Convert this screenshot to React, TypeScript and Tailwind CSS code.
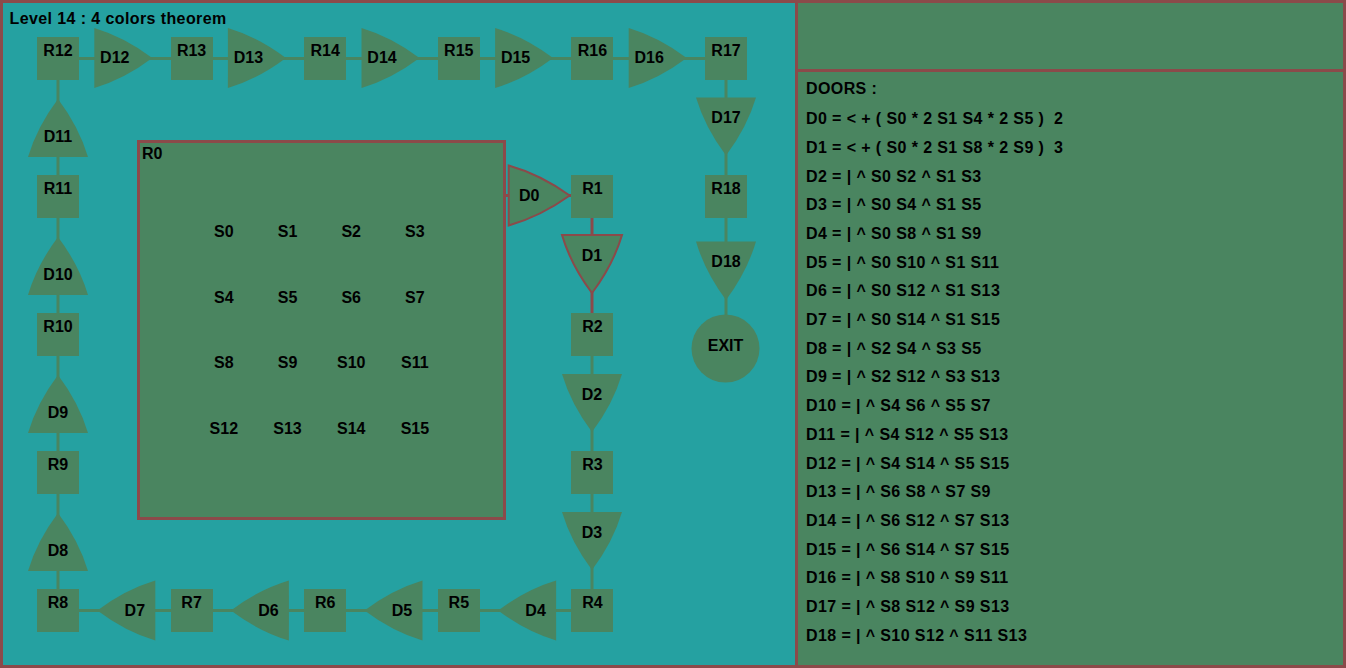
import React from 'react';

// diagram coordinates are page pixels; the left panel starts at (3,3)
const OFF = 3;
const colX = (i: number) => 58 + 133.6 * i;
const rowY = (j: number) => 58.5 + 138 * j;

type Room = { name: string; x: number; y: number };
type Door = { name: string; bx: number; by: number; dx: number; dy: number; len?: number; hot?: boolean };

const rooms: Room[] = [
    { name: 'R12', x: colX(0), y: rowY(0) },
    { name: 'R13', x: colX(1), y: rowY(0) },
    { name: 'R14', x: colX(2), y: rowY(0) },
    { name: 'R15', x: colX(3), y: rowY(0) },
    { name: 'R16', x: colX(4), y: rowY(0) },
    { name: 'R17', x: colX(5), y: rowY(0) },
    { name: 'R11', x: colX(0), y: rowY(1) },
    { name: 'R10', x: colX(0), y: rowY(2) },
    { name: 'R9', x: colX(0), y: rowY(3) },
    { name: 'R8', x: colX(0), y: rowY(4) },
    { name: 'R7', x: colX(1), y: rowY(4) },
    { name: 'R6', x: colX(2), y: rowY(4) },
    { name: 'R5', x: colX(3), y: rowY(4) },
    { name: 'R4', x: colX(4), y: rowY(4) },
    { name: 'R1', x: colX(4), y: rowY(1) },
    { name: 'R2', x: colX(4), y: rowY(2) },
    { name: 'R3', x: colX(4), y: rowY(3) },
    { name: 'R18', x: colX(5), y: rowY(1) },
];

const doors: Door[] = [
    ...['D12', 'D13', 'D14', 'D15', 'D16'].map((name, i) => ({ name, bx: colX(i) + 66.8 - 30.5, by: 58, dx: 1, dy: 0 })),
    ...['D11', 'D10', 'D9', 'D8'].map((name, j) => ({ name, bx: 58, by: rowY(j) + 69 + 29.5, dx: 0, dy: -1 })),
    ...['D7', 'D6', 'D5', 'D4'].map((name, i) => ({ name, bx: colX(i) + 66.8 + 30.5, by: 610.5, dx: -1, dy: 0 })),
    { name: 'D1', bx: 592, by: rowY(1) + 69 - 30.5, dx: 0, dy: 1, hot: true },
    { name: 'D2', bx: 592, by: rowY(2) + 69 - 29.5, dx: 0, dy: 1 },
    { name: 'D3', bx: 592, by: rowY(3) + 69 - 29.5, dx: 0, dy: 1 },
    { name: 'D17', bx: 726, by: rowY(0) + 69 - 30, dx: 0, dy: 1 },
    { name: 'D18', bx: 726, by: 241.5, dx: 0, dy: 1, len: 58.5 },
    { name: 'D0', bx: 508.7, by: 195.5, dx: 1, dy: 0, len: 61, hot: true },
];

const doorPath = (d: Door) => {
    const len = d.len ?? 58;
    const p = (u: number, v: number) => `${d.bx + u * d.dx - v * d.dy},${d.by + u * d.dy + v * d.dx}`;
    return `M${p(0, -30)} Q${p(len * 0.52, -21)} ${p(len, 0)} Q${p(len * 0.52, 21)} ${p(0, 30)} Z`;
};

const rules = [
    'D0 = < + ( S0 * 2 S1 S4 * 2 S5 )  2',
    'D1 = < + ( S0 * 2 S1 S8 * 2 S9 )  3',
    'D2 = | ^ S0 S2 ^ S1 S3',
    'D3 = | ^ S0 S4 ^ S1 S5',
    'D4 = | ^ S0 S8 ^ S1 S9',
    'D5 = | ^ S0 S10 ^ S1 S11',
    'D6 = | ^ S0 S12 ^ S1 S13',
    'D7 = | ^ S0 S14 ^ S1 S15',
    'D8 = | ^ S2 S4 ^ S3 S5',
    'D9 = | ^ S2 S12 ^ S3 S13',
    'D10 = | ^ S4 S6 ^ S5 S7',
    'D11 = | ^ S4 S12 ^ S5 S13',
    'D12 = | ^ S4 S14 ^ S5 S15',
    'D13 = | ^ S6 S8 ^ S7 S9',
    'D14 = | ^ S6 S12 ^ S7 S13',
    'D15 = | ^ S6 S14 ^ S7 S15',
    'D16 = | ^ S8 S10 ^ S9 S11',
    'D17 = | ^ S8 S12 ^ S9 S13',
    'D18 = | ^ S10 S12 ^ S11 S13',
];

// text centred on x, sitting on baseline y
const Label: React.FC<{ x: number; y: number; text: string }> = ({ x, y, text }) => (
    <div
        className="absolute -translate-x-1/2 whitespace-nowrap text-[16px] leading-[16px]"
        style={{ left: x - OFF, top: y - OFF - 13.5 }}
    >
        {text}
    </div>
);

export default function App() {
    return (
        <div className="w-[1346px] h-[668px] flex gap-[3px] border-[3px] border-[#8b4a4a] bg-[#8b4a4a] font-['Liberation_Sans',Arial,sans-serif] font-bold text-black">
            <div className="relative w-[792px] h-full bg-[#25a1a1] overflow-hidden">
                <svg className="absolute inset-0" width={792} height={662} viewBox="3 3 792 662">
                    <g stroke="#4a8560" strokeWidth={3} fill="none">
                        <path d="M58 58.5 H726" />
                        <path d="M58 58.5 V610.5" />
                        <path d="M58 610.5 H592" />
                        <path d="M592 334.5 V610.5" />
                        <path d="M726 58.5 V348.5" />
                    </g>
                    <g stroke="#8b4a4a" strokeWidth={3} fill="none">
                        <path d="M592 196.5 V334.5" />
                        <path d="M506 195.5 H592" />
                    </g>
                    {doors.map((d) => (
                        <path
                            key={d.name}
                            d={doorPath(d)}
                            fill="#4a8560"
                            stroke={d.hot ? '#8b4a4a' : 'none'}
                            strokeWidth={2}
                        />
                    ))}
                    <circle cx={725.5} cy={348.5} r={34} fill="#4a8560" />
                </svg>

                <div className="relative pt-[7.5px] pl-[6.5px] text-[16px] leading-[16px] tracking-[0.4px]">
                    Level 14 : 4 colors theorem
                </div>

                {/* big room R0 with its 4x4 slots */}
                <div className="absolute left-[134px] top-[137px] w-[369px] h-[380px] border-[3px] border-[#8b4a4a] bg-[#4a8560] text-[16px]">
                    <div className="pt-[2.5px] pl-[2px] leading-[16px]">R0</div>
                    <div className="mt-[37.4px] pl-[52px] grid grid-cols-[repeat(4,63.7px)] auto-rows-[65.7px] leading-[65.7px] text-center">
                        {Array.from({ length: 16 }).map((_, k) => (
                            <div key={k}>S{k}</div>
                        ))}
                    </div>
                </div>

                {rooms.map((r) => (
                    <React.Fragment key={r.name}>
                        <div
                            className="absolute w-[42px] h-[43px] bg-[#4a8560]"
                            style={{ left: r.x - 21 - OFF, top: r.y - 21.5 - OFF }}
                        />
                        <Label x={r.x} y={r.y - 2.5} text={r.name} />
                    </React.Fragment>
                ))}

                {doors.map((d) => (
                    <Label key={d.name} x={d.bx + 20.5 * d.dx} y={d.by + 20.5 * d.dy + 5.8} text={d.name} />
                ))}
                <Label x={725.5} y={351} text="EXIT" />
            </div>

            <div className="flex-1 flex flex-col gap-[3px]">
                <div className="h-[66px] bg-[#4a8560]" />
                <div className="flex-1 bg-[#4a8560] pt-[3.4px] pl-[8px] text-[16px] leading-[28.7px] tracking-[0.4px]">
                    <div className="mb-[1px]">DOORS :</div>
                    {rules.map((r) => (
                        <div key={r} className="whitespace-pre">{r}</div>
                    ))}
                </div>
            </div>
        </div>
    );
}
